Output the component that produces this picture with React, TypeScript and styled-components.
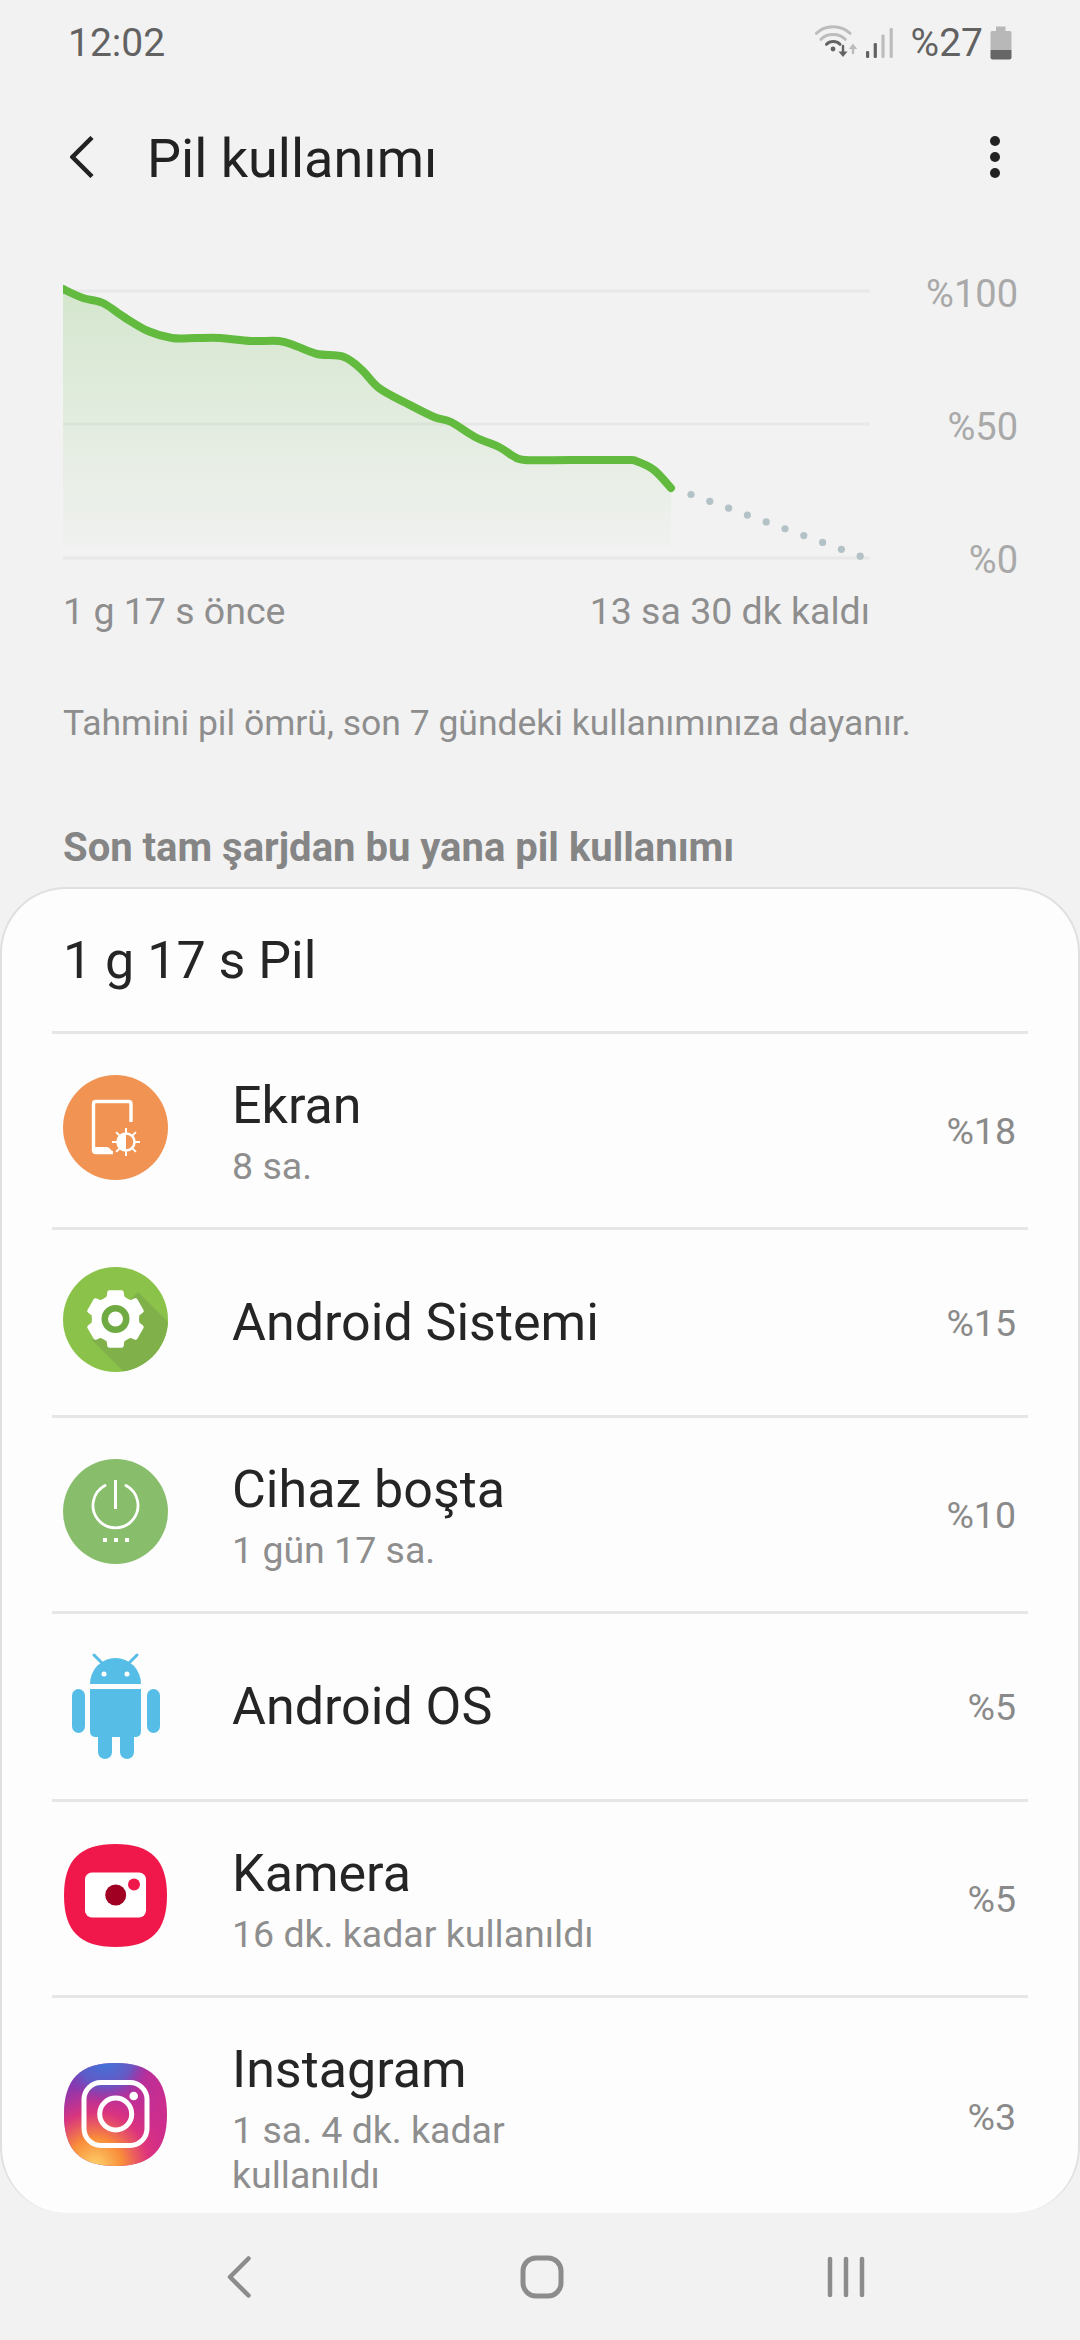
import type { ReactNode } from 'react';
import styled, { createGlobalStyle } from 'styled-components';

const GlobalStyle = createGlobalStyle`
  html, body {
    margin: 0;
    padding: 0;
    background: #f2f2f2;
    font-family: Roboto, "Noto Sans", sans-serif;
    overflow: hidden;
  }
  * { box-sizing: border-box; }
`;

const Page = styled.div`
  width: 1080px;
  height: 2340px;
  display: flex;
  flex-direction: column;
  background: #f2f2f2;
`;

/* ── Status bar ───────────────────────────────────────────────────── */
const StatusBar = styled.div`
  height: 86px;
  padding: 0 68px;
  display: flex;
  align-items: center;
  justify-content: space-between;
  color: #626262;
  font-size: 39px;
`;

const StatusRight = styled.div`
  display: flex;
  align-items: center;
  gap: 7px;
`;

/* ── Toolbar ──────────────────────────────────────────────────────── */
const Toolbar = styled.div`
  height: 142px;
  padding: 0 79px 0 70px;
  display: flex;
  align-items: center;
  color: #222;
`;

const Title = styled.h1`
  flex: 1;
  margin: 3px 0 0 53px;
  font-size: 54px;
  font-weight: 400;
`;

/* ── Chart ────────────────────────────────────────────────────────── */
const ChartRow = styled.div`
  margin-top: 52px;
  padding-left: 63px;
  display: flex;
`;

const AxisLabels = styled.div`
  width: 148px;
  height: 290px;
  margin-top: -8px;
  display: flex;
  flex-direction: column;
  gap: 89px;
  text-align: right;
  color: #a9a9a9;
  font-size: 38px;
  line-height: 44px;
`;

const TimeRow = styled.div`
  width: 807px;
  margin: 19px 0 0 63px;
  display: flex;
  justify-content: space-between;
  color: #8e8e8e;
  font-size: 37.5px;
  line-height: 44px;
`;

const Note = styled.p`
  margin: 68px 0 0 63px;
  color: #8e8e8e;
  font-size: 35.5px;
  line-height: 44px;
`;

const SectionHeading = styled.h2`
  margin: 81px 0 0 63px;
  color: #858585;
  font-size: 40px;
  font-weight: 700;
  line-height: 44px;
`;

/* ── Usage card ───────────────────────────────────────────────────── */
const Card = styled.div`
  flex: 1;
  min-height: 0;
  margin-top: 17px;
  padding: 0 50px;
  overflow: hidden;
  background: #fdfdfd;
  border: 2px solid #e0e0e0;
  border-bottom: none;
  border-radius: 66px;
`;

const CardHeader = styled.div`
  height: 142px;
  padding-left: 11px;
  display: flex;
  align-items: center;
  color: #252525;
  font-size: 52px;
`;

const Row = styled.div`
  padding: 40px 12px 40px 11px;
  display: flex;
  align-items: center;
  border-top: 3px solid #e6e6e6;
`;

/* icons sit a little above the row's centre line */
const IconBox = styled.div`
  flex: none;
  width: 105px;
  height: 105px;
  margin: -3px 64px 3px 0;
  display: flex;
`;

const RowText = styled.div<{ $detailed: boolean }>`
  flex: 1;
  min-width: 0;
  margin: ${({ $detailed }) => ($detailed ? '2px 0 -2px' : '0')};
`;

const RowTitle = styled.div`
  color: #252525;
  font-size: 52px;
  line-height: 60px;
`;

const RowSub = styled.div`
  max-width: 400px;
  margin-top: 8px;
  color: #8e8e8e;
  font-size: 37.5px;
  line-height: 45px;
`;

const Percent = styled.div`
  color: #8a8a8a;
  font-size: 37.5px;
`;

/* ── Navigation bar ───────────────────────────────────────────────── */
const NavBar = styled.div`
  flex: none;
  height: 127px;
  padding-left: 227px;
  display: grid;
  grid-template-columns: 293px 307px auto;
  align-items: center;
`;

/* ── Drawings ─────────────────────────────────────────────────────── */
const LINE: [number, number][] = [
  [63, 289], [83, 298], [103, 303], [124, 317], [148, 331], [172, 338], [196, 338], [220, 338],
  [251, 341], [279, 341], [296, 346], [317, 354], [344, 357], [362, 370], [379, 388],
  [406, 403], [434, 417], [451, 422], [475, 437], [499, 447], [513, 456], [525, 460],
  [570, 460], [625, 460], [636, 461], [654, 470], [671, 488],
];

const smoothPath = (pts: [number, number][]) => {
  let d = `M${pts[0][0]} ${pts[0][1]}`;
  for (let i = 0; i < pts.length - 1; i++) {
    const p0 = pts[Math.max(i - 1, 0)];
    const p1 = pts[i];
    const p2 = pts[i + 1];
    const p3 = pts[Math.min(i + 2, pts.length - 1)];
    const c1x = p1[0] + (p2[0] - p0[0]) / 6;
    const c1y = p1[1] + (p2[1] - p0[1]) / 6;
    const c2x = p2[0] - (p3[0] - p1[0]) / 6;
    const c2y = p2[1] - (p3[1] - p1[1]) / 6;
    d += ` C${c1x.toFixed(1)} ${c1y.toFixed(1)} ${c2x.toFixed(1)} ${c2y.toFixed(1)} ${p2[0]} ${p2[1]}`;
  }
  return d;
};

const BatteryChart = () => {
  const line = smoothPath(LINE);
  const dots = Array.from({ length: 10 }, (_, i) => ({
    x: 691 + i * 18.8,
    y: 494.5 + i * 6.85,
  }));
  return (
    <svg width="807" height="290" viewBox="63 280 807 290">
      <defs>
        <linearGradient id="area" x1="0" y1="0" x2="0" y2="1">
          <stop offset="0" stopColor="#5fb83f" stopOpacity="0.2" />
          <stop offset="1" stopColor="#5fb83f" stopOpacity="0.015" />
        </linearGradient>
      </defs>
      {[291, 424, 558].map(y => (
        <rect key={y} x="63" y={y - 1.5} width="807" height="3" fill="#e8e8e8" />
      ))}
      <path d={`${line} L671 547 L63 547 Z`} fill="url(#area)" />
      <path d={line} fill="none" stroke="#62bb3f" strokeWidth="8" strokeLinecap="round" strokeLinejoin="round" />
      {dots.map(d => (
        <circle key={d.x} cx={d.x} cy={d.y} r="3.6" fill="#b3c2c7" />
      ))}
    </svg>
  );
};

const StatusIcons = () => (
  <svg width="89" height="36" viewBox="0 0 89 36" fill="none" strokeLinecap="round">
    <path d="M1.5 8.3 C10 -0.5 26 -0.5 35 8.3" stroke="#bcbcbc" strokeWidth="3" />
    <path d="M6 14.3 C12 8 24 8 30.3 14.3" stroke="#bcbcbc" strokeWidth="3" />
    <path d="M11.5 19.3 C15 15.5 21.5 15.5 25 19.3" stroke="#626262" strokeWidth="3" />
    <circle cx="18" cy="24" r="2.4" fill="#626262" />
    <path d="M28 21 V27" stroke="#626262" strokeWidth="2.4" />
    <path d="M23.5 26.5 H32.5 L28 32 Z" fill="#626262" />
    <path d="M38 23 V28" stroke="#bcbcbc" strokeWidth="2.4" />
    <path d="M33.8 24 H42.2 L38 18.5 Z" fill="#bcbcbc" />
    <rect x="51" y="26" width="3.2" height="7" rx="1.2" fill="#626262" />
    <rect x="58.7" y="18" width="3.2" height="15" rx="1.2" fill="#626262" />
    <rect x="66.4" y="9.5" width="3.2" height="23.5" rx="1.2" fill="#bcbcbc" />
    <rect x="74.6" y="3" width="3.2" height="30" rx="1.2" fill="#bcbcbc" />
  </svg>
);

const BatteryIcon = () => (
  <svg width="22" height="34" viewBox="0 0 22 34">
    <path d="M6 0.5 H15.5 V5 H20 Q21.5 5 21.5 6.5 V24 H0.5 V6.5 Q0.5 5 2 5 H6 Z" fill="#b8b8b8" />
    <path d="M0.5 24 H21.5 V31.5 Q21.5 33.5 19.5 33.5 H2.5 Q0.5 33.5 0.5 31.5 Z" fill="#666" />
  </svg>
);

const BackIcon = () => (
  <svg width="24" height="42" viewBox="0 0 24 42" fill="none">
    <path d="M22 1.5 L2.5 21 L22 40.5" stroke="#222" strokeWidth="4.5" />
  </svg>
);

const MoreIcon = () => (
  <svg width="12" height="44" viewBox="0 0 12 44" fill="#222">
    <circle cx="6" cy="6" r="5" />
    <circle cx="6" cy="22" r="5" />
    <circle cx="6" cy="38" r="5" />
  </svg>
);

const ScreenIcon = () => (
  <svg width="105" height="105" viewBox="0 0 105 105">
    <circle cx="52.5" cy="52.5" r="52.5" fill="#f09353" />
    <path d="M50 77.5 H33 Q30.5 77.5 30.5 75 V29 Q30.5 26.5 33 26.5 H65.5 Q68 26.5 68 29 V47" fill="none" stroke="#fff" strokeWidth="3.4" />
    <path d="M31 72 H44 Q48 73 50 79 H31 Z" fill="#fff" />
    <circle cx="63" cy="67" r="16" fill="#f09353" />
    {[0, 45, 90, 135, 180, 225, 270, 315].map(a => (
      <rect key={a} x="62" y="53" width="2" height="6" fill="#fff" transform={`rotate(${a} 63 67)`} />
    ))}
    <circle cx="63" cy="67" r="8.5" fill="#f09353" stroke="#fff" strokeWidth="2.5" />
    <path d="M63 58 A9 9 0 0 0 63 76 Z" fill="#fff" />
  </svg>
);

const gearPath = (cx: number, cy: number) => {
  const pts: string[] = [];
  const polar = (r: number, deg: number) => {
    const t = (deg * Math.PI) / 180;
    return `${(cx + r * Math.cos(t)).toFixed(1)} ${(cy + r * Math.sin(t)).toFixed(1)}`;
  };
  for (let i = 0; i < 6; i++) {
    const a = -90 + i * 60;
    pts.push(polar(21.5, a - 30), polar(22.5, a - 18), polar(27.5, a - 13), polar(27.5, a + 13), polar(22.5, a + 18));
  }
  return `M${pts.join(' L')} Z`;
};

const SystemIcon = () => (
  <svg width="105" height="105" viewBox="0 0 105 105">
    <defs>
      <clipPath id="sysClip">
        <circle cx="52.5" cy="52.5" r="52.5" />
      </clipPath>
    </defs>
    <circle cx="52.5" cy="52.5" r="52.5" fill="#8bc34a" />
    <path d="M29 73 L75 25 L115 65 L115 120 L72 116 Z" fill="#7fb04a" clipPath="url(#sysClip)" />
    <path d={gearPath(52.5, 52)} fill="#fff" stroke="#fff" strokeWidth="4" strokeLinejoin="round" />
    <circle cx="52.5" cy="52" r="10.75" fill="#fff" stroke="#6faa42" strokeWidth="6.5" />
  </svg>
);

const IdleIcon = () => (
  <svg width="105" height="105" viewBox="0 0 105 105">
    <circle cx="52.5" cy="52.5" r="52.5" fill="#88bd6b" />
    <path d="M42 26.5 A22.5 22.5 0 1 0 63 26.5" fill="none" stroke="#fff" strokeWidth="2.8" strokeLinecap="round" />
    <rect x="51" y="21" width="3" height="29" fill="#fff" />
    <rect x="40" y="79" width="4" height="4" fill="#fff" />
    <rect x="51" y="79" width="4" height="4" fill="#fff" />
    <rect x="62" y="79" width="4" height="4" fill="#fff" />
  </svg>
);

/* drawn 3px lower than the other icons, it is centred in its row in the reference */
const AndroidIcon = () => (
  <svg width="105" height="108" viewBox="0 -3 105 108" fill="#56bde6">
    <path d="M27 30 A25.5 26 0 0 1 78 30 Z" />
    <path d="M31 1 L39 9 M74 1 L66 9" stroke="#56bde6" strokeWidth="3" strokeLinecap="round" />
    <circle cx="41" cy="20" r="2.5" fill="#fff" />
    <circle cx="64" cy="20" r="2.5" fill="#fff" />
    <path d="M27 35 H78 V77 Q78 83 72 83 H33 Q27 83 27 77 Z" />
    <rect x="9" y="35" width="13" height="44" rx="6.5" />
    <rect x="84" y="35" width="13" height="44" rx="6.5" />
    <rect x="35" y="70" width="14" height="35" rx="7" />
    <rect x="57" y="70" width="14" height="35" rx="7" />
  </svg>
);

const SQUIRCLE = 'M52.5 1 C88 1 104 17 104 52.5 C104 88 88 104 52.5 104 C17 104 1 88 1 52.5 C1 17 17 1 52.5 1 Z';

const CameraIcon = () => (
  <svg width="105" height="105" viewBox="0 0 105 105">
    <path d={SQUIRCLE} fill="#f0184a" />
    <rect x="22" y="29.5" width="61" height="45" rx="7" fill="#fff" />
    <circle cx="52.7" cy="52" r="10.5" fill="#a00022" />
    <circle cx="71" cy="41.5" r="6" fill="#f0184a" />
  </svg>
);

const InstagramIcon = () => (
  <svg width="105" height="105" viewBox="0 0 105 105">
    <defs>
      <linearGradient id="igBase" x1="0" y1="0" x2="1" y2="0.4">
        <stop offset="0" stopColor="#7b3bb5" />
        <stop offset="0.55" stopColor="#b02fa0" />
        <stop offset="1" stopColor="#cc2d8c" />
      </linearGradient>
      <radialGradient id="igWarm" cx="0.3" cy="1" r="0.9">
        <stop offset="0" stopColor="#fdd36a" />
        <stop offset="0.3" stopColor="#f98c3a" />
        <stop offset="0.58" stopColor="#e0357a" stopOpacity="0.9" />
        <stop offset="0.9" stopColor="#d02d8c" stopOpacity="0" />
      </radialGradient>
      <radialGradient id="igBlue" cx="0.4" cy="-0.05" r="0.45">
        <stop offset="0" stopColor="#3b78dc" />
        <stop offset="0.6" stopColor="#4a6ad2" stopOpacity="0.7" />
        <stop offset="1" stopColor="#7b3bb5" stopOpacity="0" />
      </radialGradient>
    </defs>
    <path d={SQUIRCLE} fill="url(#igBase)" />
    <path d={SQUIRCLE} fill="url(#igWarm)" />
    <path d={SQUIRCLE} fill="url(#igBlue)" />
    <rect x="21" y="20.5" width="63" height="63" rx="17" fill="none" stroke="#fff" strokeWidth="5" />
    <circle cx="52.7" cy="52" r="16" fill="none" stroke="#fff" strokeWidth="5" />
    <circle cx="70.7" cy="34" r="4.3" fill="#fff" />
  </svg>
);

const NavBack = () => (
  <svg width="24" height="42" viewBox="0 0 24 42" fill="none">
    <path d="M21.5 2.5 L3 21 L21.5 39.5" stroke="#8c8c8c" strokeWidth="4.5" strokeLinecap="round" strokeLinejoin="round" />
  </svg>
);

const NavHome = () => (
  <svg width="44" height="44" viewBox="0 0 44 44" fill="none">
    <rect x="3" y="3" width="38" height="38" rx="13" stroke="#8c8c8c" strokeWidth="5" />
  </svg>
);

const NavRecents = () => (
  <svg width="38" height="42" viewBox="0 0 38 42" stroke="#8c8c8c" strokeWidth="4.5" strokeLinecap="round">
    <path d="M3 3 V39 M19 3 V39 M35 3 V39" />
  </svg>
);

interface UsageItem {
  icon: ReactNode;
  name: string;
  detail?: string;
  percent: string;
}

const ITEMS: UsageItem[] = [
  { icon: <ScreenIcon />, name: 'Ekran', detail: '8 sa.', percent: '%18' },
  { icon: <SystemIcon />, name: 'Android Sistemi', percent: '%15' },
  { icon: <IdleIcon />, name: 'Cihaz boşta', detail: '1 gün 17 sa.', percent: '%10' },
  { icon: <AndroidIcon />, name: 'Android OS', percent: '%5' },
  { icon: <CameraIcon />, name: 'Kamera', detail: '16 dk. kadar kullanıldı', percent: '%5' },
  { icon: <InstagramIcon />, name: 'Instagram', detail: '1 sa. 4 dk. kadar kullanıldı', percent: '%3' },
];

const App = () => (
  <Page>
    <GlobalStyle />
    <StatusBar>
      <span>12:02</span>
      <StatusRight>
        <StatusIcons />
        <span>%27</span>
        <BatteryIcon />
      </StatusRight>
    </StatusBar>
    <Toolbar>
      <BackIcon />
      <Title>Pil kullanımı</Title>
      <MoreIcon />
    </Toolbar>
    <ChartRow>
      <BatteryChart />
      <AxisLabels>
        <span>%100</span>
        <span>%50</span>
        <span>%0</span>
      </AxisLabels>
    </ChartRow>
    <TimeRow>
      <span>1 g 17 s önce</span>
      <span>13 sa 30 dk kaldı</span>
    </TimeRow>
    <Note>Tahmini pil ömrü, son 7 gündeki kullanımınıza dayanır.</Note>
    <SectionHeading>Son tam şarjdan bu yana pil kullanımı</SectionHeading>
    <Card>
      <CardHeader>1 g 17 s Pil</CardHeader>
      {ITEMS.map(item => (
        <Row key={item.name}>
          <IconBox>{item.icon}</IconBox>
          <RowText $detailed={Boolean(item.detail)}>
            <RowTitle>{item.name}</RowTitle>
            {item.detail && <RowSub>{item.detail}</RowSub>}
          </RowText>
          <Percent>{item.percent}</Percent>
        </Row>
      ))}
    </Card>
    <NavBar>
      <NavBack />
      <NavHome />
      <NavRecents />
    </NavBar>
  </Page>
);

export default App;
